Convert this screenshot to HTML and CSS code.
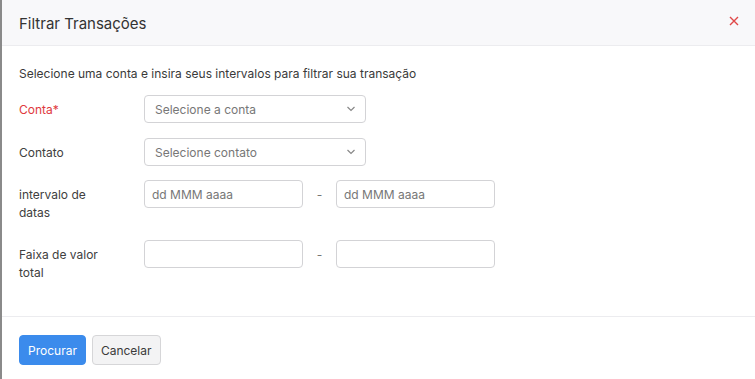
FILE: index.html
```html
<!DOCTYPE html>
<html lang="pt">
<head>
  <meta charset="UTF-8">
  <title>Filtrar Transações</title>
  <link rel="stylesheet" href="styles.css">
</head>
<body>

<div class="modal">
  <div class="modal-header">
    <h5>Filtrar Transações</h5>
    <button class="close" type="button" aria-label="Fechar">
      <svg width="10" height="10" viewBox="0 0 10 10"><path d="M1 1L9 9M9 1L1 9" stroke="#e04848" stroke-width="1.4" fill="none"/></svg>
    </button>
  </div>

  <div class="modal-body">
    <p class="intro">Selecione uma conta e insira seus intervalos para filtrar sua transação</p>

    <div class="row">
      <label class="required">Conta*</label>
      <div class="select">
        <span>Selecione a conta</span>
        <svg width="10" height="6" viewBox="0 0 10 6"><path d="M1.5 1L5 4.5L8.5 1" stroke="#888" stroke-width="1.2" fill="none"/></svg>
      </div>
    </div>

    <div class="row">
      <label>Contato</label>
      <div class="select">
        <span>Selecione contato</span>
        <svg width="10" height="6" viewBox="0 0 10 6"><path d="M1.5 1L5 4.5L8.5 1" stroke="#888" stroke-width="1.2" fill="none"/></svg>
      </div>
    </div>

    <div class="row">
      <label>intervalo de<br>datas</label>
      <div class="range">
        <input type="text" placeholder="dd MMM aaaa">
        <span class="dash">-</span>
        <input type="text" placeholder="dd MMM aaaa">
      </div>
    </div>

    <div class="row">
      <label>Faixa de valor<br>total</label>
      <div class="range">
        <input type="text">
        <span class="dash">-</span>
        <input type="text">
      </div>
    </div>
  </div>

  <div class="modal-footer">
    <button class="btn btn-primary" type="button">Procurar</button>
    <button class="btn btn-light" type="button">Cancelar</button>
  </div>
</div>

</body>
</html>
```

FILE: styles.css
```css
body {
  margin: 0;
  font-family: Inter, "Noto Sans", sans-serif;
  font-size: 12px;
  color: #3a3a3a;
  background: #fff;
}

.modal {
  border-left: 2px solid #8a8a8a;
  height: 379px;
  overflow: hidden;
}

.modal-header {
  height: 45px;
  background: #f8f8fa;
  border-bottom: 1px solid #ececef;
  display: flex;
  align-items: center;
  justify-content: space-between;
  padding: 0 16px 0 17px;
}

.modal-header h5 {
  margin: 0;
  font-size: 15px;
  font-weight: 400;
  color: #333;
  padding-top: 1px;
}

.close {
  background: none;
  border: none;
  padding: 0;
  margin-top: -3px;
  display: flex;
}

.modal-body {
  padding: 19px 17px 16px;
}

.intro {
  margin: 0 0 12px;
  line-height: 18px;
  color: #3a3a3a;
}

.row {
  display: flex;
  align-items: flex-start;
  margin-bottom: 14px;
}

.row:first-of-type {
  margin-bottom: 15px;
}

.row label {
  width: 125px;
  flex-shrink: 0;
  line-height: 18px;
  padding: 6px 0 4px;
  color: #404040;
}

.row label.required {
  color: #e0393e;
}

.select {
  box-sizing: border-box;
  width: 222px;
  height: 28px;
  border: 1px solid #d3d3d6;
  border-radius: 4px;
  display: flex;
  align-items: center;
  justify-content: space-between;
  padding: 0 9px 0 10px;
  color: #777;
}

.range {
  display: flex;
  align-items: center;
}

.range input {
  box-sizing: border-box;
  width: 159px;
  height: 28px;
  padding: 0 0 0 7px;
  border: 1px solid #d3d3d6;
  border-radius: 4px;
  font-family: inherit;
  font-size: 12px;
  color: #333;
  outline: none;
}

.range input::placeholder {
  color: #777;
}

.dash {
  width: 33px;
  text-align: center;
  color: #777;
}

.modal-footer {
  border-top: 1px solid #ececef;
  padding: 18px 17px;
  display: flex;
  gap: 6px;
}

.btn {
  height: 30px;
  border-radius: 4px;
  font-family: inherit;
  font-size: 12px;
  padding: 0 8px;
  cursor: pointer;
}

.btn-primary {
  background: #3b8bec;
  border: 1px solid #3b8bec;
  color: #fff;
}

.btn-light {
  background: #f3f3f4;
  border: 1px solid #d6d6d8;
  color: #3a3a3a;
}
```
